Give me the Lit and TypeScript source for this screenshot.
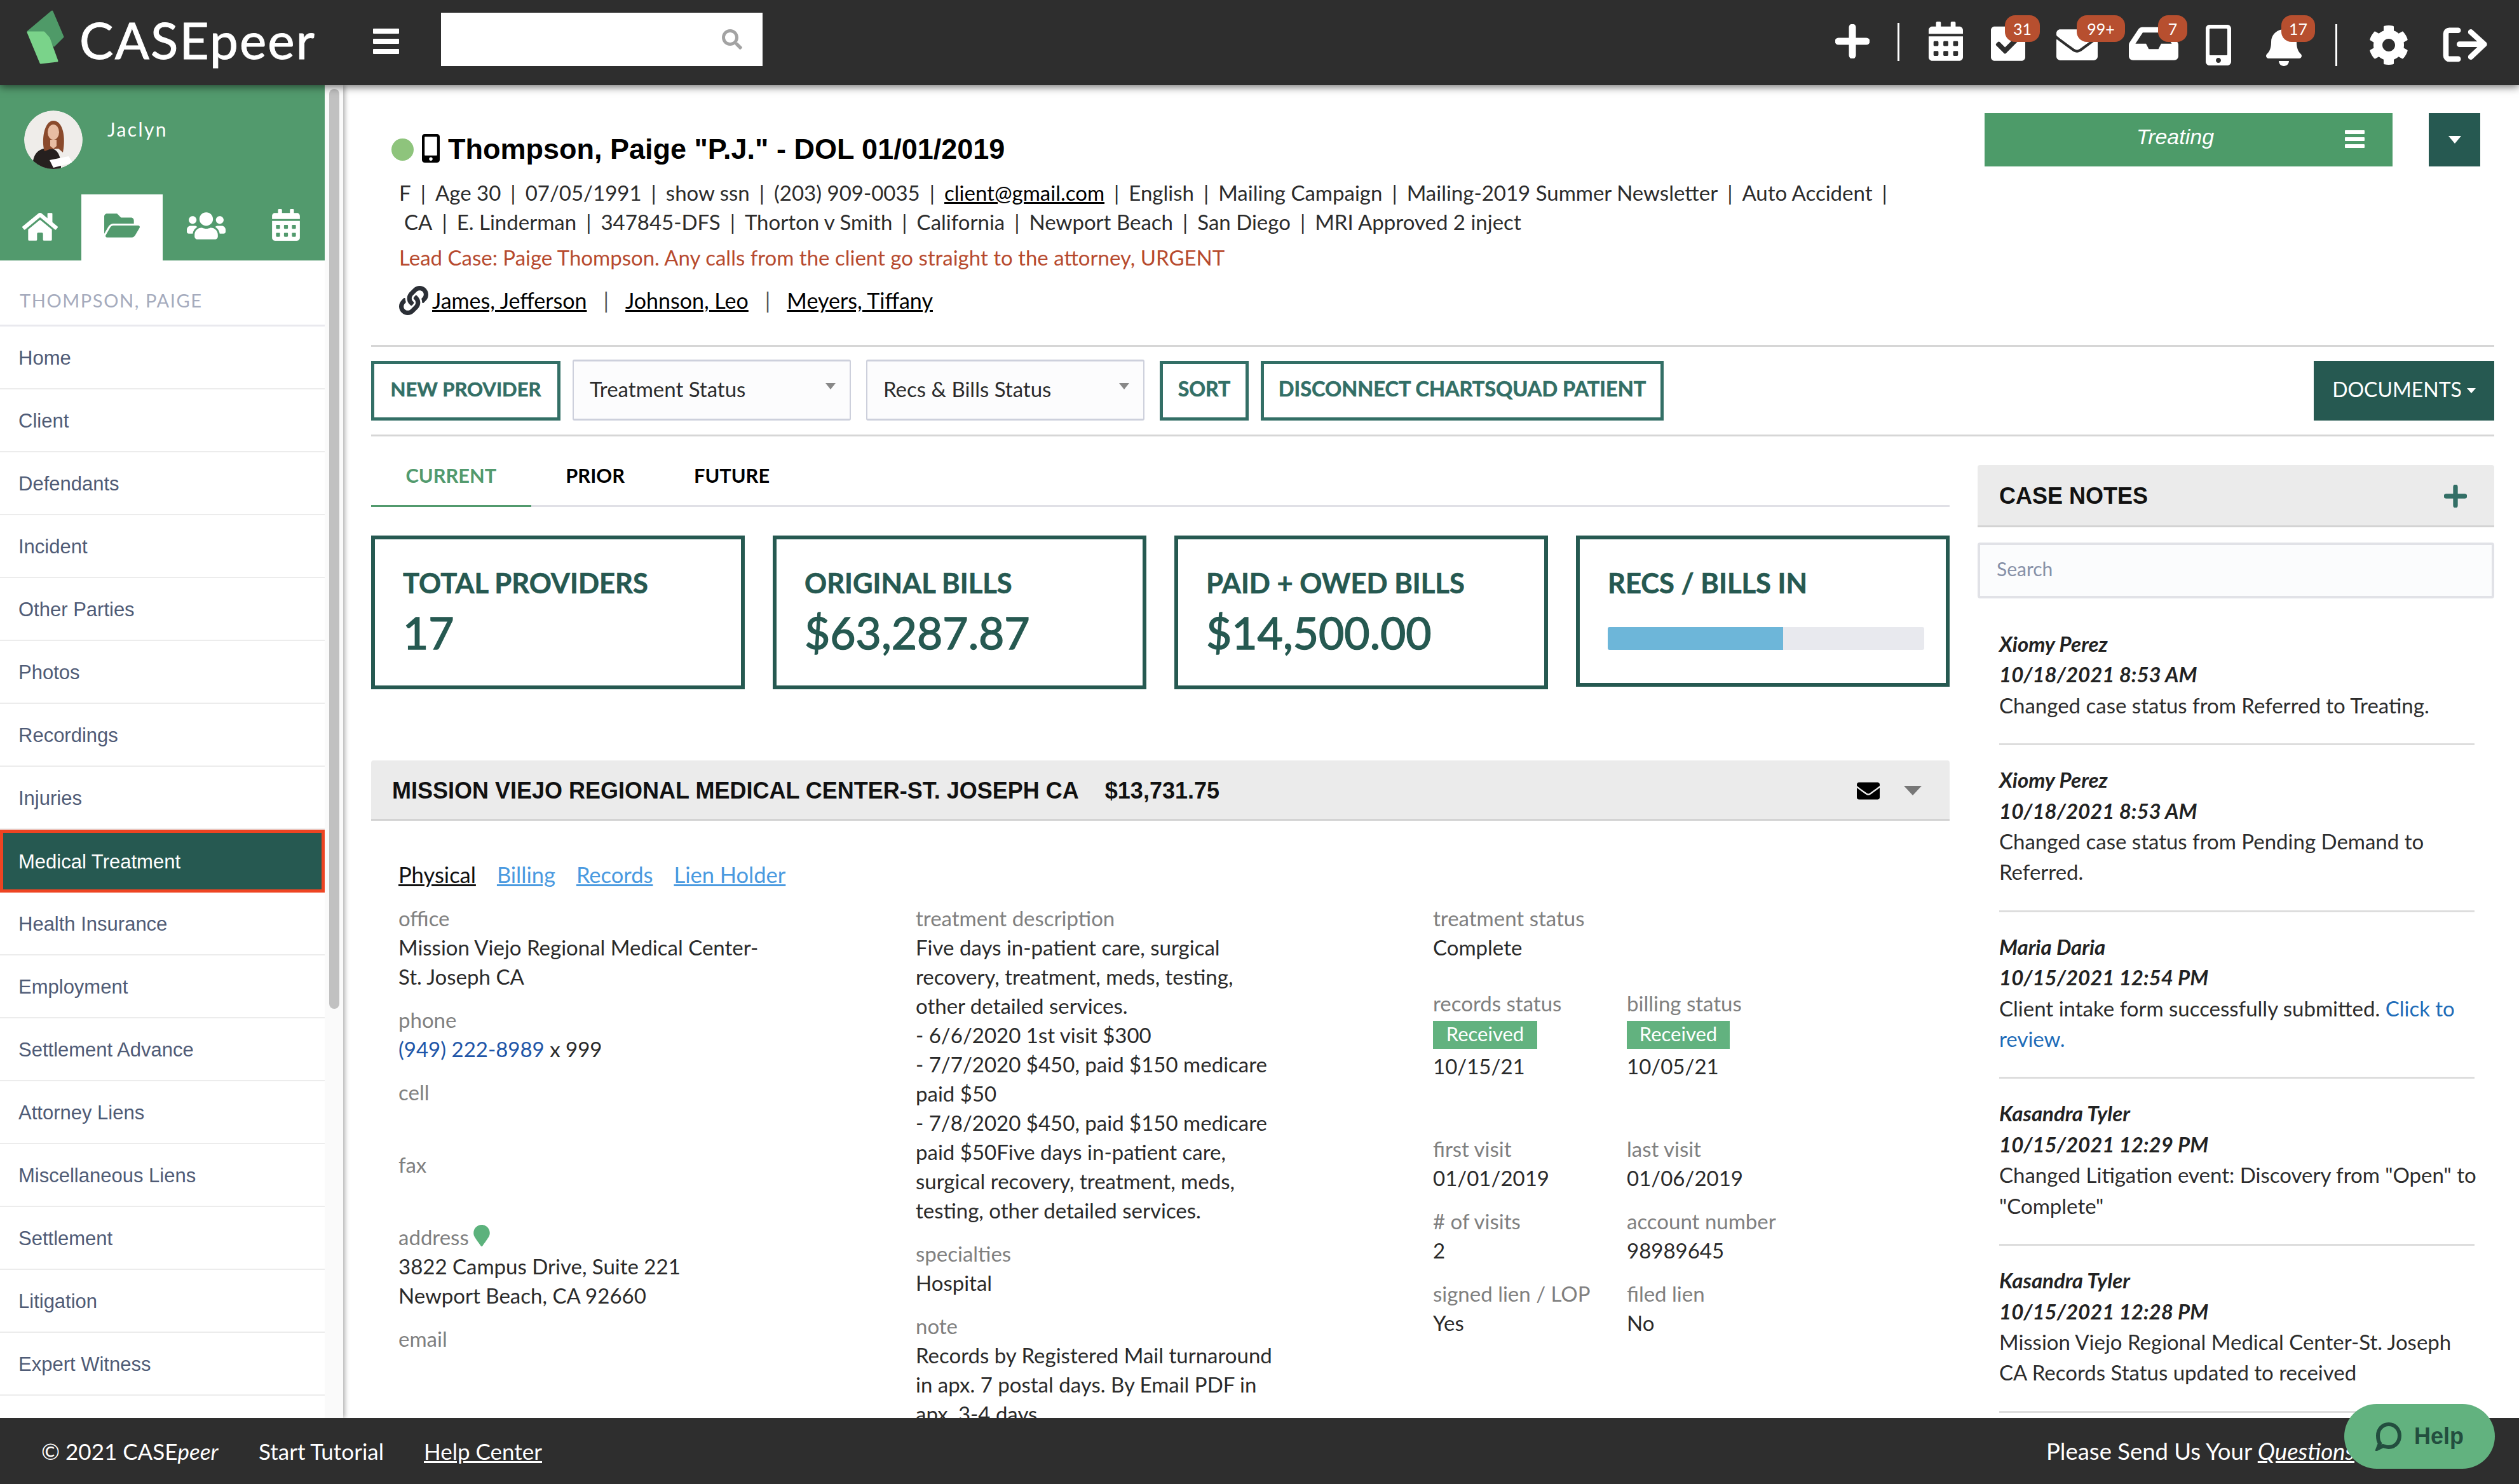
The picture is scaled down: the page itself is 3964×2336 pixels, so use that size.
import { LitElement, css, html } from "lit";
import { customElement } from "lit/decorators.js";

// font awesome style glyphs, [viewbox width, path]
const ICONS: Record<string, [number, string]> = {
  home: [576, "M280.37 148.26L96 300.11V464a16 16 0 0 0 16 16l112.06-.29a16 16 0 0 0 15.92-16V368a16 16 0 0 1 16-16h64a16 16 0 0 1 16 16v95.64a16 16 0 0 0 16 16.05L464 480a16 16 0 0 0 16-16V300L295.67 148.26a12.19 12.19 0 0 0-15.3 0zM571.6 251.47L488 182.56V44.05a12 12 0 0 0-12-12h-56a12 12 0 0 0-12 12v72.61L318.47 43a48 48 0 0 0-61 0L4.34 251.47a12 12 0 0 0-1.6 16.9l25.5 31A12 12 0 0 0 45.15 301l235.22-193.74a12.19 12.19 0 0 1 15.3 0L530.9 301a12 12 0 0 0 16.9-1.6l25.5-31a12 12 0 0 0-1.7-16.93z"],
  folder: [576, "M572.694 292.093L500.27 416.248A63.997 63.997 0 0 1 444.989 448H45.025c-18.523 0-30.064-20.093-20.731-36.093l72.424-124.155A64 64 0 0 1 152 256h399.964c18.523 0 30.064 20.093 20.73 36.093zM152 224h328v-48c0-26.51-21.49-48-48-48H272l-64-64H48C21.49 64 0 85.49 0 112v278.046l69.077-118.418C86.214 242.25 117.989 224 152 224z"],
  users: [640, "M96 224c35.3 0 64-28.7 64-64s-28.7-64-64-64-64 28.7-64 64 28.7 64 64 64zm448 0c35.3 0 64-28.7 64-64s-28.7-64-64-64-64 28.7-64 64 28.7 64 64 64zm32 32h-64c-17.6 0-33.5 7.1-45.1 18.6 40.3 22.1 68.9 62 75.1 109.4h66c17.7 0 32-14.3 32-32v-32c0-35.3-28.7-64-64-64zm-256 0c61.9 0 112-50.1 112-112S381.9 32 320 32 208 82.1 208 144s50.1 112 112 112zm76.8 32h-8.3c-20.8 10-43.9 16-68.5 16s-47.6-6-68.5-16h-8.3C179.6 288 128 339.6 128 403.2V432c0 26.5 21.5 48 48 48h288c26.5 0 48-21.5 48-48v-28.8c0-63.6-51.6-115.2-115.2-115.2zm-223.7-13.4C161.5 263.1 145.6 256 128 256H64c-35.3 0-64 28.7-64 64v32c0 17.7 14.3 32 32 32h65.9c6.3-47.4 34.9-87.3 75.2-109.4z"],
  calendar: [448, "M0 464c0 26.5 21.5 48 48 48h352c26.5 0 48-21.5 48-48V192H0v272zm320-196c0-6.6 5.4-12 12-12h40c6.6 0 12 5.4 12 12v40c0 6.6-5.4 12-12 12h-40c-6.6 0-12-5.4-12-12v-40zm0 128c0-6.6 5.4-12 12-12h40c6.6 0 12 5.4 12 12v40c0 6.6-5.4 12-12 12h-40c-6.6 0-12-5.4-12-12v-40zM192 268c0-6.6 5.4-12 12-12h40c6.6 0 12 5.4 12 12v40c0 6.6-5.4 12-12 12h-40c-6.6 0-12-5.4-12-12v-40zm0 128c0-6.6 5.4-12 12-12h40c6.6 0 12 5.4 12 12v40c0 6.6-5.4 12-12 12h-40c-6.6 0-12-5.4-12-12v-40zM64 268c0-6.6 5.4-12 12-12h40c6.6 0 12 5.4 12 12v40c0 6.6-5.4 12-12 12H76c-6.6 0-12-5.4-12-12v-40zm0 128c0-6.6 5.4-12 12-12h40c6.6 0 12 5.4 12 12v40c0 6.6-5.4 12-12 12H76c-6.6 0-12-5.4-12-12v-40zM400 64h-48V16c0-8.8-7.2-16-16-16h-32c-8.8 0-16 7.2-16 16v48H160V16c0-8.8-7.2-16-16-16h-32c-8.8 0-16 7.2-16 16v48H48C21.5 64 0 85.5 0 112v48h448v-48c0-26.5-21.5-48-48-48z"],
  check: [448, "M400 480H48c-26.51 0-48-21.49-48-48V80c0-26.51 21.49-48 48-48h352c26.51 0 48 21.49 48 48v352c0 26.51-21.49 48-48 48zm-204.686-98.059l184-184c6.248-6.248 6.248-16.379 0-22.627l-22.627-22.627c-6.248-6.248-16.379-6.249-22.628 0L184 302.745l-70.059-70.059c-6.248-6.248-16.379-6.248-22.628 0l-22.627 22.627c-6.248 6.248-6.248 16.379 0 22.627l104 104c6.249 6.25 16.379 6.25 22.628.001z"],
  mail: [512, "M502.3 190.8c3.9-3.1 9.7-.2 9.7 4.7V400c0 26.5-21.5 48-48 48H48c-26.5 0-48-21.5-48-48V195.6c0-5 5.7-7.8 9.7-4.7 22.4 17.4 52.1 39.5 154.1 113.6 21.1 15.4 56.7 47.8 92.2 47.6 35.7.3 72-32.8 92.3-47.6 102-74.1 131.6-96.3 154-113.7zM256 320c23.2.4 56.6-29.2 73.4-41.4 132.7-96.3 142.8-104.7 173.4-128.7 5.8-4.5 9.2-11.5 9.2-18.9v-19c0-26.5-21.5-48-48-48H48C21.5 64 0 85.5 0 112v19c0 7.4 3.4 14.3 9.2 18.9 30.6 23.9 40.7 32.4 173.4 128.7 16.8 12.2 50.2 41.8 73.4 41.4z"],
  inbox: [576, "M567.938 243.908L462.25 85.374A48.003 48.003 0 0 0 422.311 64H153.689a48 48 0 0 0-39.938 21.374L8.062 243.908A47.994 47.994 0 0 0 0 270.533V400c0 26.51 21.49 48 48 48h480c26.51 0 48-21.49 48-48V270.533a47.994 47.994 0 0 0-8.062-26.625zM162.252 128h251.497l85.333 128H376l-32 64H232l-32-64H76.918l85.334-128z"],
  phone: [320, "M272 0H48C21.5 0 0 21.5 0 48v416c0 26.5 21.5 48 48 48h224c26.5 0 48-21.5 48-48V48c0-26.5-21.5-48-48-48zM160 480c-17.7 0-32-14.3-32-32s14.3-32 32-32 32 14.3 32 32-14.3 32-32 32zm112-108c0 6.6-5.4 12-12 12H60c-6.6 0-12-5.4-12-12V60c0-6.6 5.4-12 12-12h200c6.6 0 12 5.4 12 12v312z"],
  bell: [448, "M224 512c35.32 0 63.97-28.65 63.97-64H160.03c0 35.35 28.65 64 63.97 64zm215.39-149.71c-19.32-20.76-55.47-51.99-55.47-154.29 0-77.7-54.48-139.9-127.94-155.16V32c0-17.67-14.32-32-31.98-32s-31.98 14.33-31.98 32v20.84C118.56 68.1 64.08 130.3 64.08 208c0 102.3-36.15 133.53-55.47 154.29-6 6.45-8.66 14.16-8.61 21.71.11 16.4 12.98 32 32.1 32h383.8c19.12 0 32-15.6 32.1-32 .05-7.55-2.61-15.27-8.61-21.71z"],
  gear: [512, "M487.4 315.7l-42.6-24.6c4.3-23.2 4.3-47 0-70.2l42.6-24.6c4.9-2.8 7.1-8.6 5.5-14-11.1-35.6-30-67.8-54.7-94.6-3.8-4.1-10-5.1-14.8-2.3L380.8 110c-17.9-15.4-38.5-27.3-60.8-35.1V25.8c0-5.6-3.9-10.5-9.4-11.7-36.7-8.2-74.3-7.8-109.2 0-5.5 1.2-9.4 6.1-9.4 11.7V75c-22.2 7.9-42.8 19.8-60.8 35.1L88.7 85.5c-4.9-2.8-11-1.9-14.8 2.3-24.7 26.7-43.6 58.9-54.7 94.6-1.7 5.4.6 11.2 5.5 14L67.3 221c-4.3 23.2-4.3 47 0 70.2l-42.6 24.6c-4.9 2.8-7.1 8.6-5.5 14 11.1 35.6 30 67.8 54.7 94.6 3.8 4.1 10 5.1 14.8 2.3l42.6-24.6c17.9 15.4 38.5 27.3 60.8 35.1v49.2c0 5.6 3.9 10.5 9.4 11.7 36.7 8.2 74.3 7.8 109.2 0 5.5-1.2 9.4-6.1 9.4-11.7v-49.2c22.2-7.9 42.8-19.8 60.8-35.1l42.6 24.6c4.9 2.8 11 1.9 14.8-2.3 24.7-26.7 43.6-58.9 54.7-94.6 1.5-5.5-.7-11.3-5.6-14.1zM256 336c-44.1 0-80-35.9-80-80s35.9-80 80-80 80 35.9 80 80-35.9 80-80 80z"],
  link: [512, "M326.612 185.391c59.747 59.809 58.927 155.698.36 214.59-.11.12-.24.25-.36.37l-67.2 67.2c-59.27 59.27-155.699 59.262-214.96 0-59.27-59.26-59.27-155.7 0-214.96l37.106-37.106c9.84-9.84 26.786-3.3 27.294 10.606.648 17.722 3.826 35.527 9.69 52.721 1.986 5.822.567 12.262-3.783 16.612l-13.087 13.087c-28.026 28.026-28.905 73.66-1.155 101.96 28.024 28.579 74.086 28.749 102.325.51l67.2-67.19c28.191-28.191 28.073-73.757 0-101.83-3.701-3.694-7.429-6.564-10.341-8.569a16.037 16.037 0 0 1-6.947-12.606c-.396-10.567 3.348-21.456 11.698-29.806l21.054-21.055c5.521-5.521 14.182-6.199 20.584-1.731a152.482 152.482 0 0 1 20.522 17.197zM467.547 44.449c-59.261-59.262-155.69-59.27-214.96 0l-67.2 67.2c-.12.12-.25.25-.36.37-58.566 58.892-59.387 154.781.36 214.59a152.454 152.454 0 0 0 20.521 17.196c6.402 4.468 15.064 3.789 20.584-1.731l21.054-21.055c8.35-8.35 12.094-19.239 11.698-29.806a16.037 16.037 0 0 0-6.947-12.606c-2.912-2.005-6.64-4.875-10.341-8.569-28.073-28.073-28.191-73.639 0-101.83l67.2-67.19c28.239-28.239 74.3-28.069 102.325.51 27.75 28.3 26.872 73.934-1.155 101.96l-13.087 13.087c-4.35 4.35-5.769 10.79-3.783 16.612 5.864 17.194 9.042 34.999 9.69 52.721.509 13.906 17.454 20.446 27.294 10.606l37.106-37.106c59.271-59.259 59.271-155.699.001-214.959z"],
  pin: [384, "M172.268 501.67C26.97 291.031 0 269.413 0 192 0 85.961 85.961 0 192 0s192 85.961 192 192c0 77.413-26.97 99.031-172.268 309.67-9.535 13.774-29.93 13.773-39.464 0z"],
  search: [512, "M505 442.7L405.3 343c-4.5-4.5-10.6-7-17-7H372c27.6-35.3 44-79.7 44-128C416 93.1 322.9 0 208 0S0 93.1 0 208s93.1 208 208 208c48.3 0 92.7-16.4 128-44v16.3c0 6.4 2.5 12.5 7 17l99.7 99.7c9.4 9.4 24.6 9.4 33.9 0l28.3-28.3c9.4-9.4 9.4-24.6.1-34zM208 336c-70.7 0-128-57.2-128-128 0-70.7 57.2-128 128-128 70.7 0 128 57.2 128 128 0 70.7-57.2 128-128 128z"],
};

const icon = (name: string, cls = "") => {
  const [w, d] = ICONS[name];
  return html`<svg class="ic ${cls}" viewBox="0 0 ${w} 512"><path d=${d}></path></svg>`;
};

const plus = (cls: string) => html`<svg class=${cls} viewBox="0 0 54 54"><path d="M27 5v44M5 27h44" fill="none" stroke="currentColor" stroke-width="11" stroke-linecap="round"></path></svg>`;

const TOOLS = [
  { i: "calendar", ml: 46, w: 54, top: 34 },
  { i: "check", ml: 44, w: 54, top: 38, badge: "31", bl: 22, bw: 55 },
  { i: "mail", ml: 49, w: 65, top: 38, badge: "99+", bl: 32, bw: 76 },
  { i: "inbox", ml: 49, w: 78, top: 34, badge: "7", bl: 46, bw: 46 },
  { i: "phone", ml: 43, w: 40, top: 39 },
  { i: "bell", ml: 55, w: 56, top: 40, badge: "17", bl: 24, bw: 53 },
];

const MENU = ["Home", "Client", "Defendants", "Incident", "Other Parties", "Photos", "Recordings", "Injuries", "Medical Treatment", "Health Insurance", "Employment", "Settlement Advance", "Attorney Liens", "Miscellaneous Liens", "Settlement", "Litigation", "Expert Witness", "Reports"];

const LINE1 = ["F", "Age 30", "07/05/1991", "show ssn", "(203) 909-0035", "@client@gmail.com", "English", "Mailing Campaign", "Mailing-2019 Summer Newsletter", "Auto Accident", ""];
const LINE2 = ["CA", "E. Linderman", "347845-DFS", "Thorton v Smith", "California", "Newport Beach", "San Diego", "MRI Approved 2 inject"];

const NOTES = [
  { who: "Xiomy Perez", at: "10/18/2021 8:53 AM", text: html`Changed case status from Referred to Treating.` },
  { who: "Xiomy Perez", at: "10/18/2021 8:53 AM", text: html`Changed case status from Pending Demand to Referred.` },
  { who: "Maria Daria", at: "10/15/2021 12:54 PM", text: html`Client intake form successfully submitted. <a>Click to review.</a>` },
  { who: "Kasandra Tyler", at: "10/15/2021 12:29 PM", text: html`Changed Litigation event: Discovery from "Open" to "Complete"` },
  { who: "Kasandra Tyler", at: "10/15/2021 12:28 PM", text: html`Mission Viejo Regional Medical Center-St. Joseph CA Records Status updated to received` },
];

@customElement("app-root")
export class AppRoot extends LitElement {
  static styles = css`
    :host {
      display: block;
      width: 3964px;
      height: 2336px;
      overflow: hidden;
      position: relative;
      font-family: Lato, "Liberation Sans", sans-serif;
      font-size: 33px;
      line-height: 46px;
      color: #2c2c2c;
      background: #fff;
    }
    .ic { fill: currentColor; display: block; }
    a { cursor: pointer; }
    .page { display: flex; flex-direction: column; height: 2336px; }

    /* top bar */
    .top {
      height: 134px;
      flex: none;
      background: #2e2e2e;
      display: flex;
      align-items: flex-start;
      position: relative;
      z-index: 3;
      box-shadow: 0 3px 12px rgba(0, 0, 0, 0.55);
      color: #fff;
    }
    .logo { width: 60px; height: 86px; margin: 16px 0 0 41px; flex: none; }
    .wordmark {
      font-size: 80px;
      line-height: 100px;
      letter-spacing: 2.2px;
      margin: 12px 0 0 24px;
      -webkit-text-stroke: 1px #fff;
      width: 370px;
      flex: none;
      white-space: nowrap;
    }
    .burger { display: flex; flex-direction: column; gap: 8px; flex: none; margin: 45px 0 0 92px; width: 41px; }
    .burger i { height: 8px; background: #fff; border-radius: 1px; display: block; }
    .searchbox {
      width: 506px;
      height: 84px;
      margin: 20px 0 0 66px;
      background: #fff;
      color: #a3a3a3;
      display: flex;
      align-items: center;
      justify-content: flex-end;
      padding-right: 32px;
      box-sizing: border-box;
      flex: none;
    }
    .searchbox svg { width: 32px; height: 32px; }
    .tools { margin-left: auto; display: flex; align-items: flex-start; padding-right: 48px; }
    .topplus { width: 54px; height: 54px; margin-top: 38px; flex: none; }
    .tsep { width: 3px; background: #fff; flex: none; }
    .tsep.a { height: 60px; margin: 36px 0 0 44px; }
    .tsep.b { height: 66px; margin: 38px 0 0 53px; }
    .tool { position: relative; flex: none; }
    .badge {
      position: absolute;
      top: -14px;
      height: 42px;
      border-radius: 16px;
      background: #b74f2f;
      font-size: 25px;
      line-height: 42px;
      text-align: center;
    }
    .gear { width: 64px; height: 64px; margin: 39px 0 0 49px; flex: none; }
    .logout { width: 73px; height: 56px; margin: 42px 0 0 52px; flex: none; }

    /* sidebar */
    .middle { flex: 1; display: flex; min-height: 0; }
    .side {
      width: 540px;
      flex: none;
      display: flex;
      background: #fafafa;
      box-shadow: 3px 0 7px rgba(0, 0, 0, 0.3);
      position: relative;
      z-index: 1;
    }
    .sidecol { width: 511px; flex: none; background: #fff; overflow: hidden; }
    .sidetrack { flex: 1; padding: 6px 6px 0 7px; }
    .sidethumb { height: 1448px; background: #c1c1c1; border-radius: 8px; }
    .green { background: #529a6d; height: 276px; }
    .user { height: 172px; display: flex; }
    .avatar { width: 92px; height: 92px; border-radius: 50%; margin: 40px 0 0 38px; flex: none; }
    .uname { color: #fff; font-size: 30px; letter-spacing: 2.4px; margin: 46px 0 0 39px; }
    .navs { display: grid; grid-template-columns: repeat(4, 128px); height: 104px; color: #fff; }
    .nav { display: flex; align-items: flex-start; justify-content: center; }
    .nav.on { background: #fff; color: #529a6d; }
    .n-home { width: 56px; height: 50px; margin: 26px 3px 0 0; }
    .n-folder { width: 56px; height: 50px; margin-top: 24px; }
    .n-users { width: 61px; height: 49px; margin: 25px 0 0 8px; }
    .n-cal { width: 44px; height: 50px; margin: 23px 0 0 4px; }
    .casename {
      height: 104px;
      box-sizing: border-box;
      border-bottom: 3px solid #e9e9ee;
      padding: 40px 0 0 31px;
      color: #a5abbd;
      font-size: 29px;
      letter-spacing: 1.6px;
    }
    .row {
      height: 99px;
      box-sizing: border-box;
      border-bottom: 2px solid #ececec;
      display: flex;
      align-items: center;
      padding: 2px 0 0 29px;
      font-family: "Liberation Sans", sans-serif;
      font-size: 31px;
      color: #4f5b76;
    }
    .row.on {
      background: #265951;
      color: #fff;
      border: 5px solid #ee4422;
      padding-left: 24px;
    }

    /* main */
    .main { flex: 1; min-width: 0; padding: 0 39px 0 44px; overflow: hidden; }
    .head { display: flex; justify-content: space-between; height: 409px; border-bottom: 3px solid #d6d6d6; box-sizing: content-box; }
    .info { padding: 71px 0 0 44px; }
    .title { display: flex; align-items: center; height: 60px; margin-left: -12px; }
    .dot { width: 35px; height: 35px; border-radius: 50%; background: #8ec47c; margin-right: 13px; flex: none; }
    .title .ic { width: 28px; height: 45px; margin-right: 13px; margin-top: -4px; color: #000; }
    h1 {
      margin: 0;
      font: bold 45px/60px "Liberation Sans", sans-serif;
      color: #000;
      white-space: nowrap;
    }
    .line { white-space: nowrap; margin-top: 0; height: 46px; }
    .line.l1 { margin-top: 15px; }
    .line.l2 { padding-left: 8px; }
    .line u { color: #000; }
    .sep { display: inline-block; margin: 0 15px; }
    .lead { color: #b74a2e; margin-top: 10px; }
    .links { display: flex; align-items: center; margin-top: 22px; height: 46px; white-space: nowrap; font-size: 34px; color: #000; }
    .links .ic { width: 46px; height: 46px; margin-right: 6px; color: #2b2f36; }
    .links .sep { margin: 0 26px; color: #555; }
    .status { display: flex; padding: 44px 22px 0 0; gap: 57px; align-items: flex-start; }
    .treat {
      width: 642px;
      height: 84px;
      background: #4d9b69;
      color: #fff;
      font: italic 34px "Liberation Sans", sans-serif;
      display: flex;
      align-items: center;
      box-sizing: border-box;
      padding-bottom: 10px;
      position: relative;
      justify-content: center;
    }
    .treat .burger { position: absolute; left: 567px; top: 27px; margin: 0; width: 31px; gap: 5px; }
    .treat .burger i { height: 6px; }
    .treat span { margin-right: 42px; }
    .drop { width: 81px; height: 84px; background: #265951; display: flex; align-items: center; justify-content: center; }
    .drop i, .caret { display: block; border: 10px solid transparent; border-top: 12px solid #fff; border-bottom: 0; }

    .bar {
      display: flex;
      padding: 20px 0 22px;
      border-bottom: 3px solid #d6d6d6;
      align-items: flex-end;
      height: 96px;
    }
    .btn {
      height: 94px;
      box-sizing: border-box;
      border: 5px solid #336f66;
      color: #336f66;
      font-weight: 700;
      font-size: 31px;
      -webkit-text-stroke: 0.6px #336f66;
      display: flex;
      align-items: center;
      justify-content: center;
      white-space: nowrap;
      padding-bottom: 6px;
      flex: none;
    }
    .b-new { width: 298px; margin-right: 19px; }
    .b-sort { width: 140px; margin-right: 19px; font-size: 32px; }
    .b-disc { width: 634px; font-size: 32.5px; }
    .sel {
      width: 438px;
      height: 96px;
      box-sizing: border-box;
      background: #fcfcfd;
      border: 2px solid #cdd0dc;
      border-top-width: 3px;
      border-bottom-width: 3px;
      border-radius: 3px;
      padding: 20px 25px 0;
      margin-right: 24px;
      position: relative;
      flex: none;
    }
    .sel::after {
      content: "";
      position: absolute;
      right: 22px;
      top: 34px;
      border: 8px solid transparent;
      border-top: 10px solid #888;
      border-bottom: 0;
    }
    .docs {
      margin-left: auto;
      width: 284px;
      height: 94px;
      background: #265951;
      color: #fff;
      display: flex;
      align-items: center;
      justify-content: center;
      gap: 8px;
      padding-bottom: 4px;
      box-sizing: border-box;
      font-size: 32px;
    }
    .docs .caret { border-width: 7px; border-top-width: 8px; border-bottom: 0; margin-top: 4px; }

    .cols { display: flex; gap: 44px; }
    .left { width: 2484px; flex: none; }
    .right { flex: 1; padding-top: 45px; min-width: 0; }
    .tabs { display: flex; height: 108px; border-bottom: 3px solid #e0e0e6; box-sizing: content-box; font-weight: 700; font-size: 30.8px; color: #000; }
    .tab { padding: 39px 54.5px 0; line-height: 46px; margin-bottom: -3px; }
    .tab.on { color: #529a6d; border-bottom: 3px solid #529a6d; }
    .cards { display: grid; grid-template-columns: repeat(4, 588px); gap: 44px; margin-top: 45px; align-items: start; }
    .card { height: 242px; box-sizing: border-box; border: 6px solid #265951; padding: 38px 0 0 44px; color: #265951; font-weight: 700; }
    .card.short { height: 238px; }
    .card .lab { font-size: 43.5px; line-height: 60px; white-space: nowrap; -webkit-text-stroke: 0.6px #265951; }
    .card .val { font-size: 69.5px; line-height: 80px; margin-top: 8px; font-weight: 400; -webkit-text-stroke: 1.5px #265951; }
    .prog { width: 498px; height: 36px; background: #e8e9ee; border-radius: 3px; margin-top: 40px; overflow: hidden; }
    .prog div { width: 276px; height: 36px; background: #6db6d9; }

    .panelhead {
      margin-top: 112px;
      height: 95px;
      box-sizing: border-box;
      background: #ebebeb;
      border-bottom: 3px solid #d3d3d3;
      border-radius: 4px 4px 0 0;
      padding: 3px 44px 0 33px;
      display: flex;
      align-items: center;
      font: bold 36px "Liberation Sans", sans-serif;
      color: #111;
    }
    .panelhead .amt { margin-left: 41px; }
    .panelhead .ic { width: 36px; height: 36px; margin-left: auto; color: #000; }
    .panelhead .tri { border: 14px solid transparent; border-top: 15px solid #777; border-bottom: 0; margin-left: 38px; }
    .subtabs { display: flex; padding: 62px 0 0 43px; gap: 33px; color: #4a9ae0; font-size: 34.5px; }
    .subtabs u.on { color: #111; }
    .grid { display: grid; grid-template-columns: 814px 814px 1fr; margin: 22px 0 0 43px; }
    .f { margin-bottom: 22px; }
    .f .k { color: #808080; display: block; }
    .f .v { color: #2a2a2a; display: block; min-height: 46px; }
    .pair { display: grid; grid-template-columns: 305px 305px; }
    .pin { display: inline-block; width: 26px; height: 34px; color: #5cb27c; margin-left: 7px; vertical-align: -2px; }
    .tel { color: #1e56a8; }
    .gap42 { margin-top: 42px; }
    .gap87 { margin-top: 62px; }
    .tag { display: block; width: 164px; height: 44px; line-height: 40px; margin: 5px 0 4px; background: #62b27f; color: #fff; text-align: center; font-size: 31px; }
    .tag.w2 { width: 162px; }

    /* notes */
    .nh {
      height: 98px;
      box-sizing: border-box;
      background: #ebebeb;
      border-bottom: 3px solid #d3d3d3;
      border-radius: 4px 4px 0 0;
      display: flex;
      align-items: center;
      justify-content: space-between;
      padding: 3px 43px 0 34px;
      font: bold 36px "Liberation Sans", sans-serif;
      color: #111;
    }
    .nh svg { width: 36px; height: 36px; color: #336f66; }
    .nsearch {
      margin-top: 24px;
      height: 88px;
      box-sizing: border-box;
      background: #fbfcfd;
      border: 4px solid #e1e2e7;
      border-radius: 4px;
      padding: 14px 26px;
      color: #8791a8;
      font-size: 30px;
    }
    .notes { margin-top: 47px; }
    .note { margin: 0 31px 30px 34px; padding-bottom: 36px; border-bottom: 3px solid #ddd; line-height: 48.4px; }
    .note b { display: block; font-style: italic; font-weight: 700; color: #222; }
    .note .t { display: block; margin-right: -14px; }
    .note a { color: #1e6cb8; }

    /* footer */
    .foot {
      height: 104px;
      flex: none;
      background: #2e2e2e;
      color: #fff;
      display: flex;
      align-items: center;
      padding: 0 0 0 65px;
      position: relative;
      z-index: 2;
      white-space: nowrap;
      font-size: 35px;
    }
    .foot .ft1 { width: 342px; flex: none; }
    .foot .ft2 { width: 260px; flex: none; }
    .foot .ft4 { margin-left: auto; width: 744px; overflow: hidden; font-size: 36.5px; }
    .help {
      position: absolute;
      right: 38px;
      bottom: 24px;
      width: 237px;
      height: 102px;
      border-radius: 51px;
      background: #62b27f;
      display: flex;
      align-items: center;
      justify-content: center;
      gap: 19px;
      color: #234e3f;
      font: bold 36px "Liberation Sans", sans-serif;
      z-index: 4;
    }
    .help svg { width: 42px; height: 46px; fill: none; stroke: #234e3f; stroke-width: 6; }
  `;

  renderTop() {
    return html`<div class="top">
      <svg class="logo" viewBox="0 0 60 86">
        <path d="M41 2 58 42 44 56 30 34 3 34Z" fill="#4f9a68" stroke="#4f9a68" stroke-width="3" stroke-linejoin="round"></path>
        <path d="M3 35H28L36 44 49 80 23 83Z" fill="#7ad38a" stroke="#7ad38a" stroke-width="3" stroke-linejoin="round"></path>
      </svg>
      <div class="wordmark">CASEpeer</div>
      <div class="burger"><i></i><i></i><i></i></div>
      <div class="searchbox">${icon("search")}</div>
      <div class="tools">
        ${plus("topplus")}
        <div class="tsep a"></div>
        ${TOOLS.map(
          (t) => html`<div class="tool" style="margin-left:${t.ml}px;margin-top:${t.top}px;width:${t.w}px">
            ${icon(t.i)}
            ${t.badge ? html`<span class="badge" style="left:${t.bl}px;width:${t.bw}px;top:${24 - t.top}px">${t.badge}</span>` : ""}
          </div>`
        )}
        <div class="tsep b"></div>
        ${icon("gear", "gear")}
        <svg class="logout" viewBox="70 65 220 168">
          <path d="M146 82H104a16 16 0 0 0-16 16V202a16 16 0 0 0 16 16H146M152 148H262M206 90 270 148 206 208" fill="none" stroke="#fff" stroke-width="26" stroke-linecap="round" stroke-linejoin="round"></path>
        </svg>
      </div>
    </div>`;
  }

  renderSide() {
    return html`<div class="side">
      <div class="sidecol">
        <div class="green">
          <div class="user">
            <svg class="avatar" viewBox="0 0 92 92">
              <circle cx="46" cy="46" r="46" fill="#efedea"></circle>
              <path d="M14 92c-2-14 2-28 16-32h14c10 3 14 12 14 32Z" fill="#26201f"></path>
              <path d="M32 64c-5-16-1-48 14-48s20 26 15 50l-7-6-14 1Z" fill="#8a4a2c"></path>
              <ellipse cx="46" cy="34" rx="9" ry="12" fill="#e8bda3"></ellipse>
              <path d="M41 46h10v10l-5 4-5-4Z" fill="#e8bda3"></path>
              <path d="M40 78l30-6 6 10-30 8Z" fill="#fff"></path>
            </svg>
            <div class="uname">Jaclyn</div>
          </div>
          <div class="navs">
            <div class="nav">${icon("home", "n-home")}</div>
            <div class="nav on">${icon("folder", "n-folder")}</div>
            <div class="nav">${icon("users", "n-users")}</div>
            <div class="nav">${icon("calendar", "n-cal")}</div>
          </div>
        </div>
        <div class="casename">THOMPSON, PAIGE</div>
        ${MENU.map((m) => html`<div class="row ${m === "Medical Treatment" ? "on" : ""}">${m}</div>`)}
      </div>
      <div class="sidetrack"><div class="sidethumb"></div></div>
    </div>`;
  }

  renderHead() {
    const seg = (s: string, i: number, all: string[]) => html`${s.startsWith("@") ? html`<u>${s.slice(1)}</u>` : s}${i < all.length - 1 ? html`<span class="sep">|</span>` : ""}`;
    return html`<div class="head">
      <div class="info">
        <div class="title">
          <span class="dot"></span>${icon("phone")}
          <h1>Thompson, Paige "P.J." - DOL 01/01/2019</h1>
        </div>
        <div class="line l1">${LINE1.map(seg)}</div>
        <div class="line l2">${LINE2.map(seg)}</div>
        <div class="line lead">Lead Case: Paige Thompson. Any calls from the client go straight to the attorney, URGENT</div>
        <div class="links">
          ${icon("link")}
          <u>James, Jefferson</u><span class="sep">|</span><u>Johnson, Leo</u><span class="sep">|</span><u>Meyers, Tiffany</u>
        </div>
      </div>
      <div class="status">
        <div class="treat"><span>Treating</span><div class="burger"><i></i><i></i><i></i></div></div>
        <div class="drop"><i></i></div>
      </div>
    </div>
    <div class="bar">
      <div class="btn b-new">NEW PROVIDER</div>
      <div class="sel">Treatment Status</div>
      <div class="sel">Recs &amp; Bills Status</div>
      <div class="btn b-sort">SORT</div>
      <div class="btn b-disc">DISCONNECT CHARTSQUAD PATIENT</div>
      <div class="docs">DOCUMENTS<span class="caret"></span></div>
    </div>`;
  }

  field(k: unknown, v: unknown = "", cls = "") {
    return html`<div class="f ${cls}"><span class="k">${k}</span><span class="v">${v}</span></div>`;
  }

  renderDetail() {
    return html`<div class="panelhead">
        MISSION VIEJO REGIONAL MEDICAL CENTER-ST. JOSEPH CA
        <span class="amt">$13,731.75</span>
        ${icon("mail")}
        <span class="tri"></span>
      </div>
      <div class="subtabs"><u class="on">Physical</u><u>Billing</u><u>Records</u><u>Lien Holder</u></div>
      <div class="grid">
        <div>
          ${this.field("office", html`Mission Viejo Regional Medical Center-<br />St. Joseph CA`)}
          ${this.field("phone", html`<span class="tel">(949) 222-8989</span> x 999`)}
          ${this.field("cell")}
          ${this.field("fax")}
          ${this.field(html`address${icon("pin", "pin")}`, html`3822 Campus Drive, Suite 221<br />Newport Beach, CA 92660`)}
          ${this.field("email")}
        </div>
        <div>
          ${this.field(
            "treatment description",
            html`Five days in-patient care, surgical<br />recovery, treatment, meds, testing,<br />other detailed services.<br />- 6/6/2020 1st visit $300<br />- 7/7/2020 $450, paid $150 medicare<br />paid $50<br />- 7/8/2020 $450, paid $150 medicare<br />paid $50Five days in-patient care,<br />surgical recovery, treatment, meds,<br />testing, other detailed services.`
          )}
          ${this.field("specialties", "Hospital")}
          ${this.field("note", html`Records by Registered Mail turnaround<br />in apx. 7 postal days. By Email PDF in<br />apx. 3-4 days`)}
        </div>
        <div>
          ${this.field("treatment status", "Complete")}
          <div class="pair gap42">
            <div class="f"><span class="k">records status</span><span class="tag">Received</span><span class="v">10/15/21</span></div>
            <div class="f"><span class="k">billing status</span><span class="tag w2">Received</span><span class="v">10/05/21</span></div>
          </div>
          <div class="pair gap87">
            ${this.field("first visit", "01/01/2019")}
            ${this.field("last visit", "01/06/2019")}
            ${this.field("# of visits", "2")}
            ${this.field("account number", "98989645")}
            ${this.field("signed lien / LOP", "Yes")}
            ${this.field("filed lien", "No")}
          </div>
        </div>
      </div>`;
  }

  render() {
    return html`<div class="page">
      ${this.renderTop()}
      <div class="middle">
        ${this.renderSide()}
        <div class="main">
          ${this.renderHead()}
          <div class="cols">
            <div class="left">
              <div class="tabs">
                <div class="tab on">CURRENT</div>
                <div class="tab">PRIOR</div>
                <div class="tab">FUTURE</div>
              </div>
              <div class="cards">
                <div class="card"><div class="lab">TOTAL PROVIDERS</div><div class="val">17</div></div>
                <div class="card"><div class="lab">ORIGINAL BILLS</div><div class="val">$63,287.87</div></div>
                <div class="card"><div class="lab">PAID + OWED BILLS</div><div class="val">$14,500.00</div></div>
                <div class="card short"><div class="lab">RECS / BILLS IN</div><div class="prog"><div></div></div></div>
              </div>
              ${this.renderDetail()}
            </div>
            <div class="right">
              <div class="nh">CASE NOTES${plus("")}</div>
              <div class="nsearch">Search</div>
              <div class="notes">
                ${NOTES.map((n) => html`<div class="note"><b>${n.who}</b><b>${n.at}</b><span class="t">${n.text}</span></div>`)}
              </div>
            </div>
          </div>
        </div>
      </div>
      <div class="foot">
        <span class="ft1">© 2021 CASE<i>peer</i></span>
        <span class="ft2">Start Tutorial</span>
        <u>Help Center</u>
        <span class="ft4">Please Send Us Your <u><i>Questions</i></u></span>
      </div>
      <div class="help">
        <svg viewBox="0 0 42 46"><path d="M21 4c10 0 17 8 17 18s-7 18-17 18c-3 0-6-1-9-2l-8 4 3-8c-2-3-3-7-3-12C4 12 11 4 21 4Z"></path></svg>
        <span>Help</span>
      </div>
    </div>`;
  }
}
